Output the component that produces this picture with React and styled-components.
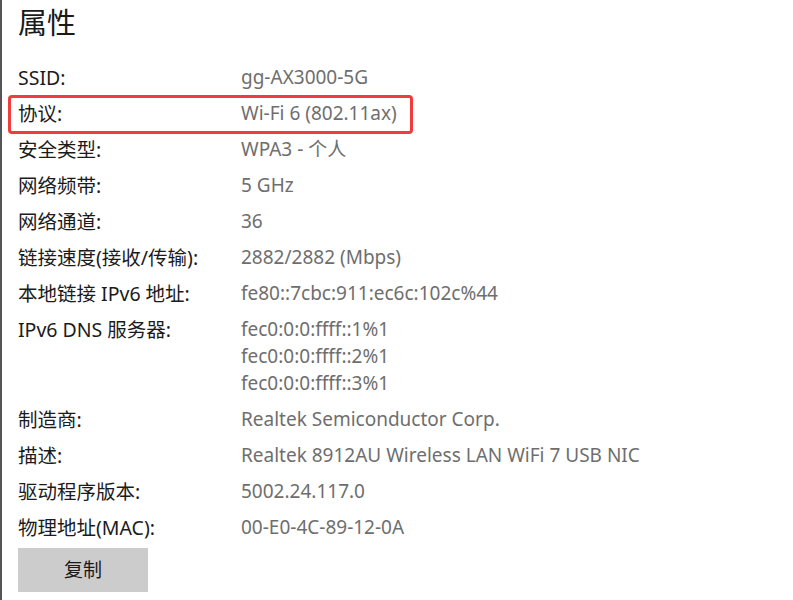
import React from 'react'
import styled, { createGlobalStyle } from 'styled-components'

const GlobalStyle = createGlobalStyle`
  html, body {
    margin: 0;
    background: #fff;
  }
  body {
    font-family: 'Noto Sans', 'Noto Sans CJK SC', sans-serif;
  }
`

const Page = styled.div`
  border-left: 2px solid #555;
  box-sizing: border-box;
  height: 600px;
  overflow: hidden;
  padding: 0 0 0 16px;
  width: 793px;
`

const Title = styled.h1`
  color: #1a1a1a;
  font-family: 'Noto Sans CJK SC', sans-serif;
  font-size: 29px;
  font-weight: 400;
  line-height: 42px;
  margin: 0;
`

const List = styled.div`
  display: flex;
  flex-direction: column;
  gap: 9px;
  margin-top: 22px;
`

const Row = styled.div`
  display: grid;
  grid-template-columns: 223px 1fr;
  line-height: 27px;
  position: relative;
`

const Label = styled.div`
  color: #1b1b1b;
  font-size: 19.5px;
  white-space: nowrap;
`

const Value = styled.div`
  color: #6e6e6e;
  display: flex;
  flex-direction: column;
  font-size: 19px;
  white-space: nowrap;
`

const Highlight = styled.div`
  border: 3px solid #f23b3b;
  border-radius: 4px;
  bottom: -7px;
  left: -10px;
  position: absolute;
  top: -5px;
  width: 399px;
`

const Button = styled.button`
  background: #cccccc;
  border: 0;
  color: #1a1a1a;
  font-family: 'Noto Sans CJK SC', sans-serif;
  font-size: 19px;
  height: 44px;
  margin-top: 7px;
  padding: 0 0 3px;
  width: 130px;
`

const rows = [
  ['SSID:', ['gg-AX3000-5G']],
  ['协议:', ['Wi-Fi 6 (802.11ax)'], true],
  ['安全类型:', ['WPA3 - 个人']],
  ['网络频带:', ['5 GHz']],
  ['网络通道:', ['36']],
  ['链接速度(接收/传输):', ['2882/2882 (Mbps)']],
  ['本地链接 IPv6 地址:', ['fe80::7cbc:911:ec6c:102c%44']],
  ['IPv6 DNS 服务器:', ['fec0:0:0:ffff::1%1', 'fec0:0:0:ffff::2%1', 'fec0:0:0:ffff::3%1']],
  ['制造商:', ['Realtek Semiconductor Corp.']],
  ['描述:', ['Realtek 8912AU Wireless LAN WiFi 7 USB NIC']],
  ['驱动程序版本:', ['5002.24.117.0']],
  ['物理地址(MAC):', ['00-E0-4C-89-12-0A']],
]

export default function App() {
  return (
    <Page>
      <GlobalStyle />
      <Title>属性</Title>
      <List>
        {rows.map(([label, values, marked]) => (
          <Row key={label}>
            <Label>{label}</Label>
            <Value>
              {values.map((v) => (
                <span key={v}>{v}</span>
              ))}
            </Value>
            {marked && <Highlight />}
          </Row>
        ))}
      </List>
      <Button>复制</Button>
    </Page>
  )
}
